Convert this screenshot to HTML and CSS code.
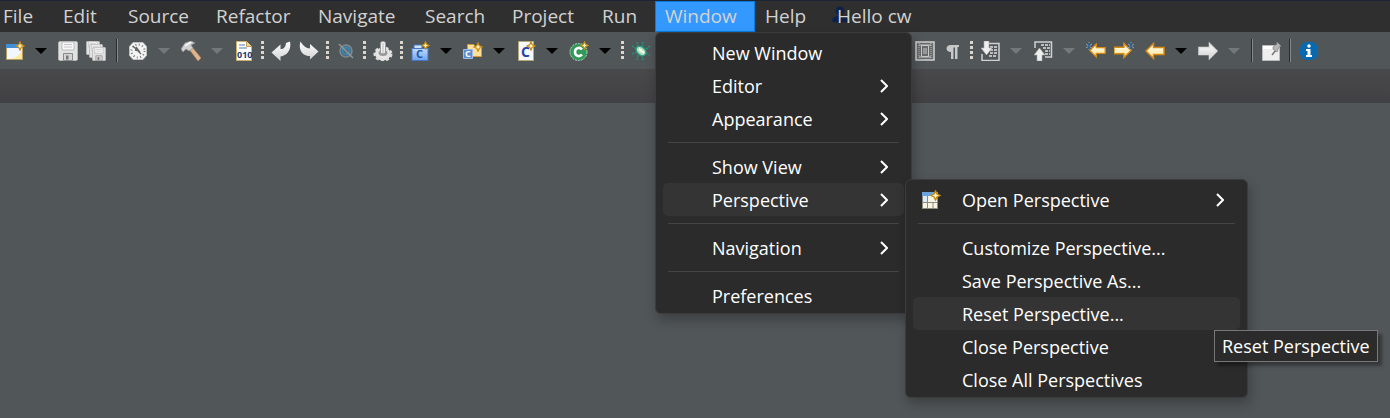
FILE: index.html
```html
<!DOCTYPE html>
<html lang="en">
<head>
<meta charset="utf-8">
<title>Hello cw</title>
<link rel="stylesheet" href="styles.css">
</head>
<body>
<svg class="sprites" aria-hidden="true">
  <defs>
    <linearGradient id="gold" x1="0" y1="0" x2="0" y2="1"><stop offset="0" stop-color="#fff"/><stop offset="1" stop-color="#ffe48c"/></linearGradient>
    <linearGradient id="grey" x1="0" y1="0" x2="0" y2="1"><stop offset="0" stop-color="#fff"/><stop offset="1" stop-color="#d2d2d2"/></linearGradient>
    <linearGradient id="blue" x1="0" y1="0" x2="0" y2="1"><stop offset="0" stop-color="#dcebff"/><stop offset="1" stop-color="#6fa3ee"/></linearGradient>
    <symbol id="plus" viewBox="0 0 10 10"><path d="M5 .8 6.3 3.7 9.2 5 6.3 6.3 5 9.2 3.7 6.3.8 5 3.7 3.7Z" fill="#fff6c8" stroke="#c38a12" stroke-width="1.2"/></symbol>
    <symbol id="disk" viewBox="0 0 20 20"><path d="M1.5.5h17l1 1v17l-1 1h-17l-1-1v-17Z" fill="#e2e2e2" stroke="#b4b4b4"/><path d="M4 1h12v8H4Z" fill="#f8f8f8" stroke="#bbb"/><path d="M6 3.5h8M6 6h8" stroke="#c4c4c4"/><path d="M5.500 12.500h9v7h-9Z" fill="#d4d4d4" stroke="#888"/><path d="M8 14.500h2.500v4H8Z" fill="#777"/></symbol>
    <symbol id="page" viewBox="0 0 20 20"><path d="M6 2.500h13v17H2V13M6 2.500V6" fill="none" stroke="#d0d0d0" stroke-width="1.500"/><path d="M10 6h7M10 9h7M10 12h7M9 15h8" stroke="#dedede" stroke-width="1.600" stroke-dasharray="3 1"/></symbol>
    <symbol id="arrow" viewBox="0 0 20 20"><path d="M1 10 8.500 2.500V6.500h10.500v7H8.500v4Z" stroke-width="1.500"/></symbol>
  </defs>
</svg>

<div class="app">
  <nav class="menubar" aria-label="Main menu">
    <button class="entry first" type="button">File</button>
    <button class="entry" type="button">Edit</button>
    <button class="entry" type="button">Source</button>
    <button class="entry" type="button">Refactor</button>
    <button class="entry" type="button">Navigate</button>
    <button class="entry" type="button">Search</button>
    <button class="entry" type="button">Project</button>
    <button class="entry" type="button">Run</button>
    <div class="open-entry">
      <button class="entry active" type="button" aria-expanded="true">Window</button>
      <div class="menu window-menu">
        <button class="item" type="button">New Window</button>
        <button class="item" type="button">Editor<svg class="chevron" viewBox="0 0 8 14"><path d="m1 1 6 6-6 6"/></svg></button>
        <button class="item" type="button">Appearance<svg class="chevron" viewBox="0 0 8 14"><path d="m1 1 6 6-6 6"/></svg></button>
        <hr class="rule">
        <button class="item" type="button">Show View<svg class="chevron" viewBox="0 0 8 14"><path d="m1 1 6 6-6 6"/></svg></button>
        <div class="parent">
          <button class="item current" type="button" aria-expanded="true">Perspective<svg class="chevron" viewBox="0 0 8 14"><path d="m1 1 6 6-6 6"/></svg></button>
          <div class="menu submenu">
            <button class="item" type="button">
              <svg class="item-icon" viewBox="0 0 20 20"><path d="M1 3h16v16H1Z" fill="#f7f4e4"/><path d="M1 2h16v4H1Z" fill="#6aa2dc"/><path d="M1 6h5v6H1Z" fill="#d8ecfb"/><path d="M1 12.500h16M6.500 6v13M12 12v7M1 18.500h16M1.500 6v13M16.500 6v13" fill="none" stroke="#8c8b7c"/><use href="#plus" x="9" y="0" width="11" height="11"/></svg>
              Open Perspective<svg class="chevron" viewBox="0 0 8 14"><path d="m1 1 6 6-6 6"/></svg></button>
            <hr class="rule">
            <button class="item" type="button">Customize Perspective...</button>
            <button class="item" type="button">Save Perspective As...</button>
            <div class="parent">
              <button class="item current" type="button" aria-describedby="tip">Reset Perspective...</button>
              <div class="tooltip" id="tip" role="tooltip">Reset Perspective</div>
            </div>
            <button class="item" type="button">Close Perspective</button>
            <button class="item" type="button">Close All Perspectives</button>
          </div>
        </div>
        <hr class="rule">
        <button class="item" type="button">Navigation<svg class="chevron" viewBox="0 0 8 14"><path d="m1 1 6 6-6 6"/></svg></button>
        <hr class="rule">
        <button class="item" type="button">Preferences</button>
      </div>
    </div>
    <button class="entry" type="button">Help</button>
    <button class="entry user" type="button"><svg class="user-icon" viewBox="0 0 16 18"><circle cx="8" cy="5" r="4.500"/><path d="M0 15c0-4 4-5 8-5s8 1 8 5c0 2-16 2-16 0Z"/></svg><span class="user-name">Hello cw</span></button>
  </nav>

  <div class="toolbar" role="toolbar" aria-label="Tools">
    <div class="group">
      <button class="tool" type="button" aria-label="New"><svg class="icon" viewBox="0 0 20 20"><path d="M1.500 3.500h16v15h-16Z" fill="#f2f7ff" stroke="#b59e60"/><path d="M1 3h13v4H1Z" fill="#3e8ed8"/><path d="M4 18c7-1 11-4 13-9v9Z" fill="#ffe9a0"/><use href="#plus" x="10" y="0" width="10" height="10"/></svg></button>
      <button class="drop" type="button" aria-label="New options"></button>
      <button class="tool" type="button" aria-label="Save"><svg class="icon"><use href="#disk"/></svg></button>
      <button class="tool" type="button" aria-label="Save all"><svg class="icon" viewBox="0 0 20 20"><use href="#disk" x="0" y="0" width="14" height="14"/><use href="#disk" x="3" y="3" width="14" height="14"/><use href="#disk" x="6" y="6" width="14" height="14"/></svg></button>
      <span class="divider"></span>
      <button class="tool" type="button" aria-label="Build history"><svg class="icon" viewBox="0 0 20 20"><path d="M5 1.500h10l3.500 4v9L15 18.500H5L1.500 14.500v-9Z" fill="#f4f4f4" stroke="#c0c0c0"/><circle cx="10" cy="10" r="6.500" fill="none" stroke="#777" stroke-width="2" stroke-dasharray="1 2.400"/><path d="m5 5 8 8M8 6l3 4-4-1" fill="none" stroke="#666" stroke-width="1.300"/></svg></button>
      <button class="drop off" type="button" aria-label="History options"></button>
      <button class="tool" type="button" aria-label="Build"><svg class="icon" viewBox="0 0 20 20"><path d="m8 8 3-2 9 11-3 3Z" fill="#e0b48c" stroke="#b98b62" stroke-width=".7"/><path d="M0 8 4 2l6-2 4 2-4 2 2 3-4 3-3-2-3 3Z" fill="#d0d0d0" stroke="#929292" stroke-width=".7"/><path d="m4 5 6-4" stroke="#fff" stroke-width="1.500"/></svg></button>
      <button class="drop off" type="button" aria-label="Build options"></button>
      <button class="tool" type="button" aria-label="Binary"><svg class="icon" viewBox="0 0 20 20"><path d="M2.500.5h10l5 5v14h-15Z" fill="#fff" stroke="#cfae6a"/><path d="M12.500.5v5h5" fill="#ead6a0" stroke="#c49e50"/><path d="M5 4h6M5 7h8" stroke="#8fa8c8" stroke-width="1.500"/><text class="bits" x="3" y="17">010</text></svg></button>
      <span class="dots"></span>
      <button class="tool" type="button" aria-label="Previous edit"><svg class="icon" viewBox="0 0 20 20"><path d="M.5 11.500 9.500 3.500V8C13 8 14.500 6 15 2L19 .5C20.500 8 17 14.500 9.500 15.500V20Z" fill="url(#grey)"/></svg></button>
      <button class="tool" type="button" aria-label="Next edit"><svg class="icon flip" viewBox="0 0 20 20"><path d="M.5 10.500 9 3V7.500C13 7.500 16 4.500 18.500.5 21 8 17 15 9 15V18.500Z" fill="url(#grey)"/></svg></button>
      <span class="dots"></span>
      <button class="tool" type="button" aria-label="Skip breakpoints"><svg class="icon" viewBox="0 0 20 20"><circle cx="10" cy="10" r="6" fill="#536774" stroke="#7d8b91" stroke-width="1.500"/><circle cx="10" cy="10" r="3.500" fill="none" stroke="#3388b9" stroke-width="1.800"/><path d="m3 3 14 14" stroke="#8d989d" stroke-width="1.500"/></svg></button>
      <span class="dots"></span>
      <button class="tool" type="button" aria-label="Settings"><svg class="icon" viewBox="0 0 20 20"><ellipse cx="10" cy="13" rx="8" ry="6.500" fill="#e6e6e6"/><ellipse cx="10" cy="13" rx="8" ry="6" fill="none" stroke="#e0e0e0" stroke-width="3" stroke-dasharray="3 2"/><ellipse cx="10" cy="12" rx="4.500" ry="3" fill="#999"/><path d="M7.500 1.500 10 0l2.500 1.500V12q-2.500 2-5 0Z" fill="#f0f0f0" stroke="#999"/><path d="M10 2v10" stroke="#bbb"/></svg></button>
      <span class="dots"></span>
      <button class="tool" type="button" aria-label="New C project"><svg class="icon" viewBox="0 0 20 20"><path d="M1 7.500h3V4h8v3.500h7M2 7.500h16v12H2Z" fill="url(#blue)" stroke="#4477c5"/><text class="letter" x="6" y="17">C</text><use href="#plus" x="11" y="0" width="9" height="9"/></svg></button>
      <button class="drop" type="button" aria-label="Project options"></button>
      <button class="tool" type="button" aria-label="New source folder"><svg class="icon" viewBox="0 0 20 20"><path d="M4.500 3.500h6l2 2h6v10h-14Z" fill="#ffe09a" stroke="#d99a35"/><path d="M.5 8.500h9v9h-9Z" fill="#5e8ed0" stroke="#9bbdec"/><text class="letter small" x="2" y="16">C</text><use href="#plus" x="10" y="1" width="10" height="10"/></svg></button>
      <button class="drop" type="button" aria-label="Folder options"></button>
      <button class="tool" type="button" aria-label="New C file"><svg class="icon" viewBox="0 0 20 20"><path d="M2.500.5h15v19h-15Z" fill="#f4f8ff" stroke="#b7a878"/><text class="letter large" x="5" y="16">C</text><use href="#plus" x="10" y="0" width="10" height="10"/></svg></button>
      <button class="drop" type="button" aria-label="File options"></button>
      <button class="tool" type="button" aria-label="New class"><svg class="icon" viewBox="0 0 20 20"><circle cx="9.500" cy="11" r="8.500" fill="#2f9a59" stroke="#b3dac0" stroke-dasharray="2 1"/><path d="M13 8.500c-2.500-3-7-1.500-7 2.500s4.500 5.500 7 2.500" fill="none" stroke="#fff" stroke-width="2.600"/><use href="#plus" x="11" y="0" width="9" height="9"/></svg></button>
      <button class="drop" type="button" aria-label="Class options"></button>
      <span class="dots"></span>
      <button class="tool bug" type="button" aria-label="Debug"><svg class="icon" viewBox="0 0 20 20"><path d="m6 1 1 5M12 1l-1 5M1 5l5 3M1 13l5-2M6 19l1-5M12 19l-1-4M15 8l4-3M15 12l4 2" fill="none" stroke="#1f9080" stroke-width="1.600" stroke-dasharray="2 1"/><ellipse cx="10" cy="10" rx="5.500" ry="3.800" transform="rotate(40 10 10)" fill="#b8dfba" stroke="#2e9e86" stroke-width="1.300"/><path d="m8 8 5 4" stroke="#f4fff0" stroke-width="2"/></svg></button>
    </div>
    <div class="group after-menu">
      <button class="tool" type="button" aria-label="Block selection"><svg class="icon" viewBox="0 0 20 20"><path d="M1 1h18v18H1Z" fill="#666a6b" stroke="#d0d0d0" stroke-width="1.500"/><path d="M4 2v16M16 2v16" stroke="#bbb" stroke-dasharray="1 1"/><path d="M6.500 4.500h7v11h-7ZM8 8h4M8 10h4M8 12h4M4 4h12M4 16h12" fill="none" stroke="#c9c9c9"/></svg></button>
      <button class="tool" type="button" aria-label="Show whitespace"><svg class="icon" viewBox="0 0 20 20"><path d="M16 4H8C2 4 2 11 8 11v7h2.500V6.500h1.500V18h2.500V6H16Z" fill="#c8c8c8"/></svg></button>
      <span class="dots"></span>
      <button class="tool" type="button" aria-label="Next annotation"><svg class="icon" viewBox="0 0 20 20"><use href="#page"/><path d="M4 0h5v7h3l-5.500 7L1 7h3Z" fill="#eee" stroke="#aaa" stroke-width=".6"/></svg></button>
      <button class="drop off" type="button" aria-label="Next options"></button>
      <button class="tool" type="button" aria-label="Previous annotation"><svg class="icon" viewBox="0 0 20 20"><path d="M2 7V1h16.500v15H12" fill="none" stroke="#d0d0d0" stroke-width="1.500"/><path d="M8 4h9M10 7h7M12 10h5M12 13h5" stroke="#dedede" stroke-width="1.600" stroke-dasharray="3 1"/><path d="M4 20h5v-6h3L6.500 7 1 14h3Z" fill="#eee" stroke="#aaa" stroke-width=".6"/></svg></button>
      <button class="drop off" type="button" aria-label="Previous options"></button>
      <button class="tool" type="button" aria-label="Previous edit location"><svg class="icon" viewBox="0 0 20 20"><use href="#arrow" x="3" y="1" width="17" height="17" fill="url(#gold)" stroke="#d78a12"/><path d="M3 1v8M0 3l6 4M6 3 0 7" stroke="#8aa6be"/><path d="M3 2v6" stroke="#1d568d" stroke-width="1.500"/></svg></button>
      <button class="tool" type="button" aria-label="Next edit location"><svg class="icon" viewBox="0 0 20 20"><use href="#arrow" transform="translate(18) scale(-1 1)" width="19" height="19" fill="url(#gold)" stroke="#d78a12"/><path d="M17 1v8M14 3l6 4M20 3l-6 4" stroke="#8aa6be"/><path d="M17 2v6" stroke="#1d568d" stroke-width="1.500"/></svg></button>
    </div>
    <div class="group history">
      <button class="tool" type="button" aria-label="Back"><svg class="icon" fill="url(#gold)" stroke="#d78a12"><use href="#arrow"/></svg></button>
      <button class="drop" type="button" aria-label="Back options"></button>
      <button class="tool" type="button" aria-label="Forward"><svg class="icon flip" fill="url(#grey)" stroke="#ddd"><use href="#arrow"/></svg></button>
      <button class="drop off" type="button" aria-label="Forward options"></button>
      <span class="divider"></span>
      <button class="tool" type="button" aria-label="Pin editor"><svg class="icon" viewBox="0 0 20 20"><path d="M1.500 4.500h17v15h-17Z" fill="#eee" stroke="#bbb"/><path d="M2 5h11v3H2Z" fill="#fff"/><path d="m11 14 4-5" stroke="#777" stroke-width="1.500"/><path d="m12 6 4-3V1l4 4-2 1-2 5-4-3Z" fill="#b5b5b5" stroke="#888" stroke-width=".8"/></svg></button>
      <span class="divider"></span>
      <button class="tool" type="button" aria-label="Information"><svg class="icon" viewBox="0 0 20 20"><rect x="1" y="1" width="18" height="18" rx="7" fill="#0869b0"/><circle cx="10" cy="5" r="1.700" fill="#fff"/><path d="M7 8h4.500v6H13v2H7v-2h1.500v-4H7Z" fill="#fff"/></svg></button>
    </div>
  </div>
  <div class="perspective-bar"></div>
  <main class="workspace"></main>
</div>
</body>
</html>
```
FILE: styles.css
```css
* { box-sizing: border-box; }

body {
  margin: 0;
  background: #515658;
  color: #fff;
  font-family: "Segoe UI", "Open Sans", "Noto Sans", sans-serif;
  font-size: 18px;
}

button {
  border: 0;
  margin: 0;
  padding: 0;
  background: none;
  color: inherit;
  font: inherit;
}

.sprites { position: absolute; width: 0; height: 0; }

.app {
  display: flex;
  flex-direction: column;
  min-height: 100vh;
  overflow: hidden;
}

.menubar {
  display: grid;
  grid-template-columns: 53px 65px 88px 102px 107px 87px 90px 63px 100px 72px auto;
  justify-content: start;
  height: 32px;
  border-top: 1px solid #1b2433;
  background: #2f2f2f;
  color: #d2d2d2;
}

.entry {
  display: flex;
  align-items: center;
  width: 100%;
  height: 31px;
  padding: 0 0 2px 10px;
  font-size: 19px;
  white-space: nowrap;
}

.first { padding-left: 3px; }

.active {
  border: 1px solid #0a7bdc;
  padding-left: 9px;
  background: #3399ff;
}

.open-entry { position: relative; }

.user { position: relative; }
.user-icon {
  position: absolute;
  left: 5px;
  top: 5px;
  width: 16px;
  height: 18px;
  fill: #0b2348;
}
.user-name { position: relative; }

.menu {
  position: absolute;
  border: 1px solid #3c3c3c;
  border-radius: 6px;
  padding: 3px 7px 1px;
  background: #2b2b2b;
  color: #fff;
  box-shadow: 2px 6px 12px rgba(0, 0, 0, .25);
}

.window-menu {
  z-index: 2;
  top: 31px;
  left: 0;
  width: 257px;
}

.submenu {
  top: -4px;
  left: 242px;
  width: 343px;
}

.parent { position: relative; }

.item {
  position: relative;
  display: flex;
  align-items: center;
  justify-content: space-between;
  width: 100%;
  height: 33px;
  padding: 0 16px 0 49px;
  border-radius: 5px;
  text-align: left;
  white-space: nowrap;
}

.current { background: #343434; }

.item-icon {
  position: absolute;
  left: 8px;
  width: 20px;
  height: 20px;
}

.chevron {
  width: 8px;
  height: 14px;
  fill: none;
  stroke: #fff;
  stroke-width: 2;
}

.rule {
  height: 1px;
  margin: 7px 5px;
  border: 0;
  background: #444;
}

.tooltip {
  position: absolute;
  top: 33px;
  left: 301px;
  height: 32px;
  padding: 0 7px;
  border: 1px solid #777;
  background: #2b2b2b;
  line-height: 30px;
  white-space: nowrap;
  box-shadow: 4px 4px 3px rgba(0, 0, 0, .35);
}

.toolbar {
  display: flex;
  height: 37px;
  padding-left: 1px;
  background: #515658;
}

.group { display: flex; align-items: center; flex: none; }
.after-menu { margin-left: 256px; }
.history { margin-left: 3px; }

.tool {
  display: flex;
  align-items: center;
  justify-content: center;
  width: 28px;
  height: 30px;
}

.icon { width: 20px; height: 20px; }
.flip { transform: scaleX(-1); }

.drop {
  display: flex;
  justify-content: center;
  width: 25px;
  padding-right: 2px;
}

.drop::before {
  content: "";
  border: 6px solid transparent;
  border-top-color: #000;
  border-bottom: 0;
}

.off::before { border-top-color: #75787a; }

.divider {
  width: 2px;
  height: 23px;
  margin: 0 6px;
  border-left: 1px solid #292b2c;
  border-right: 1px solid #85898a;
}

.history .divider { margin: 0 4px; }

.dots {
  width: 3px;
  height: 19px;
  margin: 0 3px;
  background: repeating-linear-gradient(#dcd5cc 0 3px, transparent 3px 5px);
}

.bits { fill: #173b72; font: bold 9px "Open Sans", sans-serif; }
.letter { fill: #1557a8; font: bold 11px "Open Sans", sans-serif; }
.small { fill: #fff; font-size: 9px; }
.large { fill: #2543a8; font-size: 14px; }

.perspective-bar {
  height: 34px;
  background: linear-gradient(#49494c, #414143);
}

.workspace { flex: 1; }
```
